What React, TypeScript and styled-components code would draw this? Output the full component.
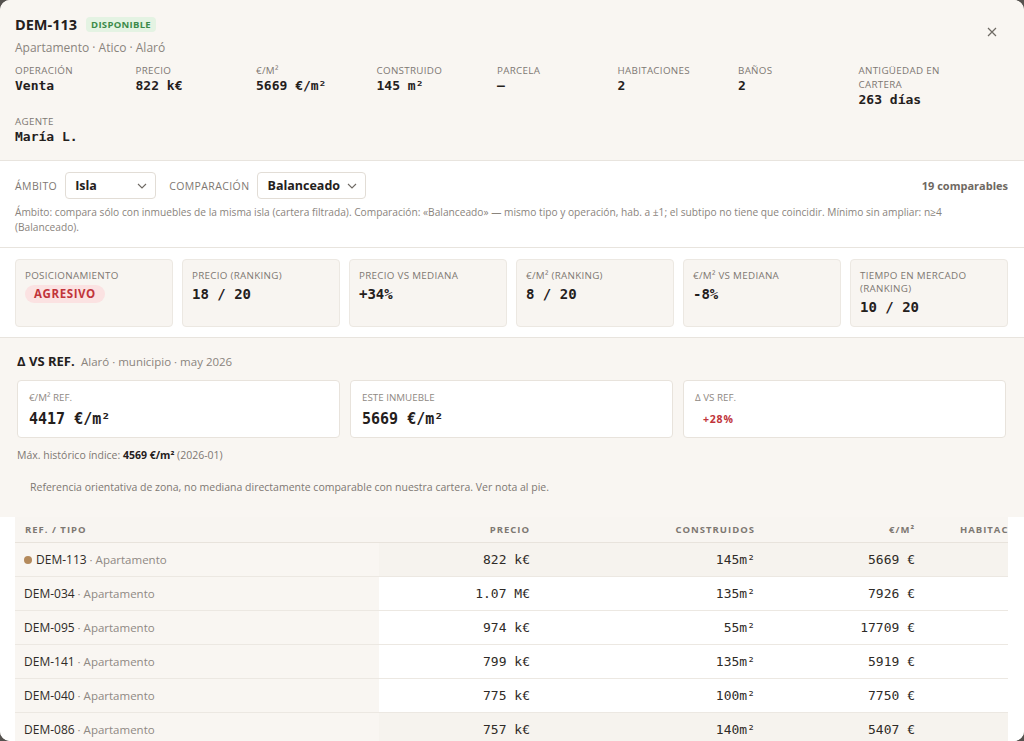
import styled, { createGlobalStyle } from "styled-components";

const GlobalStyle = createGlobalStyle`
  * { box-sizing: border-box; }
  html, body {
    margin: 0;
    padding: 0;
    background: #55524f;
    font-family: "Open Sans", "Noto Sans", sans-serif;
    color: #2a2622;
  }
`;

const stats = [
  { label: "Operación", value: "Venta" },
  { label: "Precio", value: "822 k€" },
  { label: "€/m²", value: "5669 €/m²" },
  { label: "Construido", value: "145 m²" },
  { label: "Parcela", value: "—" },
  { label: "Habitaciones", value: "2" },
  { label: "Baños", value: "2" },
  { label: "Antigüedad en cartera", value: "263 días" },
  { label: "Agente", value: "María L." },
];

const kpis = [
  { label: "Posicionamiento", value: "AGRESIVO", badge: true },
  { label: "Precio (ranking)", value: "18 / 20" },
  { label: "Precio vs mediana", value: "+34%" },
  { label: "€/m² (ranking)", value: "8 / 20" },
  { label: "€/m² vs mediana", value: "-8%" },
  { label: "Tiempo en mercado (ranking)", value: "10 / 20" },
];

const rows = [
  { ref: "DEM-113", price: "822 k€", built: "145m²", sqm: "5669 €", hab: "2", self: true, shade: true },
  { ref: "DEM-034", price: "1.07 M€", built: "135m²", sqm: "7926 €", hab: "2" },
  { ref: "DEM-095", price: "974 k€", built: "55m²", sqm: "17709 €", hab: "1" },
  { ref: "DEM-141", price: "799 k€", built: "135m²", sqm: "5919 €", hab: "3" },
  { ref: "DEM-040", price: "775 k€", built: "100m²", sqm: "7750 €", hab: "2" },
  { ref: "DEM-086", price: "757 k€", built: "140m²", sqm: "5407 €", hab: "2", shade: true },
];

const App = () => {
  return (
    <>
      <GlobalStyle />
      <Modal>
        <Header>
          <TitleRow>
            <Title>DEM-113</Title>
            <StatusBadge>Disponible</StatusBadge>
          </TitleRow>
          <Subtitle>Apartamento · Atico · Alaró</Subtitle>
          <StatsGrid>
            {stats.map((s) => (
              <Stat key={s.label}>
                <StatLabel>{s.label}</StatLabel>
                <StatValue>{s.value}</StatValue>
              </Stat>
            ))}
          </StatsGrid>
          <CloseButton aria-label="Cerrar">
            <svg width="10" height="10" viewBox="0 0 10 10">
              <path d="M1 1 L9 9 M9 1 L1 9" stroke="#6f6a64" strokeWidth="1.2" fill="none" />
            </svg>
          </CloseButton>
        </Header>

        <FilterSection>
          <FilterRow>
            <FilterLabel>Ámbito</FilterLabel>
            <Select $width={91}>
              Isla
              <Chevron />
            </Select>
            <FilterLabel>Comparación</FilterLabel>
            <Select>
              Balanceado
              <Chevron />
            </Select>
            <Count>19 comparables</Count>
          </FilterRow>
          <Description>
            Ámbito: compara sólo con inmuebles de la misma isla (cartera filtrada). Comparación:
            «Balanceado» — mismo tipo y operación, hab. a ±1; el subtipo no tiene que coincidir.
            Mínimo sin ampliar: n≥4 (Balanceado).
          </Description>
        </FilterSection>

        <KpiSection>
          {kpis.map((k) => (
            <KpiCard key={k.label}>
              <KpiLabel>{k.label}</KpiLabel>
              {k.badge ? <RiskBadge>{k.value}</RiskBadge> : <KpiValue>{k.value}</KpiValue>}
            </KpiCard>
          ))}
        </KpiSection>

        <RefSection>
          <RefTitle>
            Δ VS REF. <RefMeta>Alaró · municipio · may 2026</RefMeta>
          </RefTitle>
          <RefGrid>
            <RefCard>
              <RefLabel>€/m² ref.</RefLabel>
              <RefValue>4417 €/m²</RefValue>
            </RefCard>
            <RefCard>
              <RefLabel>Este inmueble</RefLabel>
              <RefValue>5669 €/m²</RefValue>
            </RefCard>
            <RefCard>
              <RefLabel>Δ vs ref.</RefLabel>
              <DeltaValue>+28%</DeltaValue>
            </RefCard>
          </RefGrid>
          <HistNote>
            Máx. histórico índice: <strong>4569 €/m²</strong> (2026-01)
          </HistNote>
          <Footnote>
            Referencia orientativa de zona, no mediana directamente comparable con nuestra cartera.
            Ver nota al pie.
          </Footnote>
        </RefSection>

        <TableSection>
          <TableScroll>
            <Table>
              <colgroup>
                <col style={{ width: 364 }} />
                <col style={{ width: 161 }} />
                <col style={{ width: 225 }} />
                <col style={{ width: 160 }} />
                <col style={{ width: 150 }} />
              </colgroup>
              <thead>
                <tr>
                  <Th $align="left">Ref. / Tipo</Th>
                  <Th>Precio</Th>
                  <Th>Construidos</Th>
                  <Th>€/m²</Th>
                  <Th $align="left" $pad={35}>Habitaciones</Th>
                </tr>
              </thead>
              <tbody>
                {rows.map((r) => (
                  <tr key={r.ref}>
                    <RefCell>
                      {r.self && <Dot />}
                      {r.ref}
                      <TypeText> · Apartamento</TypeText>
                    </RefCell>
                    <NumCell $shade={r.shade}>{r.price}</NumCell>
                    <NumCell $shade={r.shade}>{r.built}</NumCell>
                    <NumCell $shade={r.shade}>{r.sqm}</NumCell>
                    <NumCell $shade={r.shade} $align="left" $pad={85}>{r.hab}</NumCell>
                  </tr>
                ))}
              </tbody>
            </Table>
          </TableScroll>
        </TableSection>
      </Modal>
    </>
  );
};

const Chevron = () => (
  <ChevronIcon width="10" height="6" viewBox="0 0 10 6">
    <path d="M1 1 L5 5 L9 1" stroke="#6f6a64" strokeWidth="1.1" fill="none" />
  </ChevronIcon>
);

export default App;

/* ================= STYLES ================= */

const mono = `"DejaVu Sans Mono", "Liberation Mono", monospace`;

const Modal = styled.div`
  width: 1024px;
  height: 741px;
  overflow: hidden;
  border-radius: 10px;
  background: #f9f6f2;
  display: flex;
  flex-direction: column;
`;

const Header = styled.header`
  position: relative;
  padding: 14px 57px 15px 15px;
  background: #f9f6f2;
`;

const TitleRow = styled.div`
  display: flex;
  align-items: center;
  gap: 9px;
  height: 20px;
`;

const Title = styled.h1`
  margin: 0;
  font-size: 14.5px;
  font-weight: 700;
  color: #24201c;
`;

const StatusBadge = styled.span`
  background: #e4f3e3;
  color: #3c8a4a;
  font-size: 9.5px;
  font-weight: 700;
  text-transform: uppercase;
  letter-spacing: 0.3px;
  padding: 1px 5px;
  border-radius: 4px;
`;

const Subtitle = styled.div`
  margin-top: 6px;
  font-size: 12px;
  line-height: 16px;
  color: #8a847d;
`;

const StatsGrid = styled.div`
  margin-top: 8px;
  display: grid;
  grid-template-columns: repeat(8, 1fr);
  column-gap: 12px;
  row-gap: 7px;
`;

const Stat = styled.div`
  display: flex;
  flex-direction: column;
`;

const StatLabel = styled.span`
  font-size: 9.8px;
  line-height: 14px;
  text-transform: uppercase;
  letter-spacing: 0.3px;
  color: #7e7872;
`;

const StatValue = styled.span`
  font-family: ${mono};
  font-size: 13px;
  line-height: 16px;
  font-weight: 700;
  color: #24201c;
`;

const CloseButton = styled.button`
  position: absolute;
  top: 26px;
  right: 26px;
  width: 12px;
  height: 12px;
  padding: 0;
  border: none;
  background: none;
  display: flex;
  align-items: center;
  justify-content: center;
`;

const FilterSection = styled.section`
  background: #ffffff;
  border-top: 1px solid #e8e4de;
  border-bottom: 1px solid #e8e4de;
  padding: 11px 16px 12px 15px;
`;

const FilterRow = styled.div`
  display: flex;
  align-items: center;
  gap: 8px;
  height: 27px;
`;

const FilterLabel = styled.span`
  font-size: 10.5px;
  text-transform: uppercase;
  letter-spacing: 0.4px;
  color: #7e7872;
  margin-left: 5px;
  &:first-child { margin-left: 0; }
`;

const Select = styled.div<{ $width?: number }>`
  width: ${(p) => (p.$width ? `${p.$width}px` : "auto")};
  height: 27px;
  border: 1px solid #e2ddd6;
  border-radius: 4px;
  background: #ffffff;
  padding: 0 8px 0 9px;
  display: flex;
  align-items: center;
  justify-content: space-between;
  gap: 7px;
  font-size: 12.5px;
  font-weight: 700;
  color: #24201c;
`;

const ChevronIcon = styled.svg`
  flex-shrink: 0;
`;

const Count = styled.span`
  margin-left: auto;
  font-size: 11px;
  font-weight: 700;
  color: #6e6862;
`;

const Description = styled.p`
  margin: 6px 0 0;
  font-size: 10.2px;
  line-height: 15px;
  color: #8a847d;
`;

const KpiSection = styled.section`
  background: #ffffff;
  padding: 11px 16px 10px 15px;
  display: grid;
  grid-template-columns: repeat(6, 1fr);
  gap: 9px;
  border-bottom: 1px solid #e8e4de;
`;

const KpiCard = styled.div`
  background: #f8f5f1;
  border: 1px solid #ece8e2;
  border-radius: 4px;
  padding: 9px 9px 10px;
  display: flex;
  flex-direction: column;
  align-items: flex-start;
`;

const KpiLabel = styled.span`
  font-size: 9.8px;
  line-height: 13px;
  text-transform: uppercase;
  letter-spacing: 0.3px;
  color: #7e7872;
`;

const KpiValue = styled.span`
  margin-top: 3px;
  font-family: ${mono};
  font-size: 14px;
  line-height: 18px;
  font-weight: 700;
  color: #24201c;
`;

const RiskBadge = styled.span`
  margin-top: 3px;
  background: #fbe2e2;
  color: #c1343a;
  font-size: 11.5px;
  line-height: 18px;
  font-weight: 700;
  letter-spacing: 0.6px;
  padding: 0 9px;
  border-radius: 10px;
`;

const RefSection = styled.section`
  background: #f9f6f2;
  padding: 14px 18px 22px 17px;
`;

const RefTitle = styled.h2`
  margin: 0;
  font-size: 13px;
  line-height: 18px;
  font-weight: 700;
  color: #24201c;
`;

const RefMeta = styled.span`
  margin-left: 3px;
  font-size: 11.5px;
  font-weight: 400;
  color: #8a847d;
`;

const RefGrid = styled.div`
  margin-top: 9px;
  display: grid;
  grid-template-columns: repeat(3, 1fr);
  gap: 10px;
`;

const RefCard = styled.div`
  background: #ffffff;
  border: 1px solid #e8e3dc;
  border-radius: 4px;
  padding: 10px 11px 8px;
  display: flex;
  flex-direction: column;
  align-items: flex-start;
`;

const RefLabel = styled.span`
  font-size: 9.8px;
  line-height: 13px;
  text-transform: uppercase;
  color: #8f8983;
`;

const RefValue = styled.span`
  margin-top: 5px;
  font-family: ${mono};
  font-size: 15px;
  line-height: 20px;
  font-weight: 700;
  color: #24201c;
`;

const DeltaValue = styled.span`
  margin-top: 5px;
  padding: 0 8px;
  font-size: 10.5px;
  line-height: 20px;
  font-weight: 700;
  letter-spacing: 0.8px;
  color: #c1343a;
`;

const HistNote = styled.div`
  margin-top: 10px;
  font-size: 10.5px;
  line-height: 15px;
  color: #7e7872;

  strong {
    color: #24201c;
    font-weight: 700;
  }
`;

const Footnote = styled.div`
  margin-top: 17px;
  padding-left: 13px;
  font-size: 10.5px;
  line-height: 15px;
  color: #7e7872;
`;

const TableSection = styled.section`
  background: #ffffff;
  padding: 0 16px 0 15px;
  flex: 1;
`;

const TableScroll = styled.div`
  overflow: hidden;
`;

const Table = styled.table`
  width: 1060px;
  border-collapse: collapse;
  table-layout: fixed;
`;

const Th = styled.th<{ $align?: string; $pad?: number }>`
  background: #f8f5f1;
  height: 25px;
  padding: 0 10px 0 ${(p) => p.$pad ?? 10}px;
  text-align: ${(p) => p.$align || "right"};
  font-size: 9.5px;
  font-weight: 700;
  text-transform: uppercase;
  letter-spacing: 1px;
  color: #7e7872;
  border-bottom: 1px solid #e8e3dc;
  white-space: nowrap;
`;

const RefCell = styled.td`
  background: #f9f6f2;
  height: 34px;
  padding: 0 9px;
  font-size: 12px;
  color: #2f2b27;
  border-bottom: 1px solid #ece8e2;
  white-space: nowrap;
`;

const TypeText = styled.span`
  font-size: 11.5px;
  color: #8f8983;
`;

const Dot = styled.span`
  display: inline-block;
  width: 8px;
  height: 8px;
  border-radius: 50%;
  background: #b48a5c;
  margin-right: 4px;
  vertical-align: 0;
`;

const NumCell = styled.td<{ $shade?: boolean; $align?: string; $pad?: number }>`
  background: ${(p) => (p.$shade ? "#f6f3ee" : "#ffffff")};
  height: 34px;
  padding: 0 10px 0 ${(p) => p.$pad ?? 10}px;
  text-align: ${(p) => p.$align || "right"};
  font-family: ${mono};
  font-size: 13px;
  color: #2f2b27;
  border-bottom: 1px solid #ece8e2;
  white-space: nowrap;
`;
